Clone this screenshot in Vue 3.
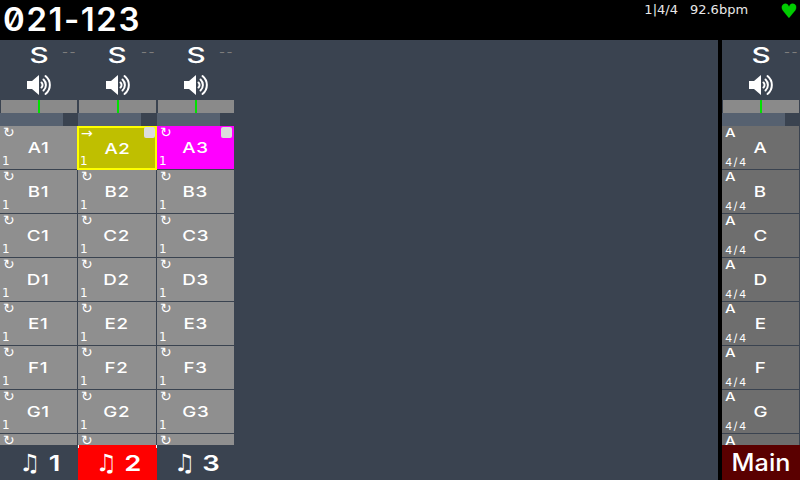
<script setup>
const rows = ['A', 'B', 'C', 'D', 'E', 'F', 'G']

const tracks = [
  { id: 1, selected: false },
  { id: 2, selected: true },
  { id: 3, selected: false },
]

const partClass = (track, row) => {
  if (row !== 'A') return ''
  if (track.id === 2) return 'part-next'
  if (track.id === 3) return 'part-playing'
  return ''
}
</script>

<template>
  <div class="screen">
    <header class="topbar">
      <div class="title">021-123</div>
      <div class="status">
        <span class="transport">1|4/4</span>
        <span class="bpm">92.6bpm</span>
        <span class="heart">♥</span>
      </div>
    </header>

    <main class="body">
      <section class="tracks">
        <div v-for="track in tracks" :key="track.id" class="strip">
          <div class="solo">
            <span class="solo-label">S</span>
            <span class="dashes">--</span>
          </div>
          <div class="speaker">
            <svg width="26" height="22" viewBox="0 0 26 22">
              <path d="M1 7h5l7-6v20l-7-6H1z" fill="#fff" />
              <g fill="none" stroke="#fff" stroke-width="2" stroke-linecap="round">
                <path d="M15.5 8.5a3.5 3.5 0 0 1 0 5" />
                <path d="M17.5 5.5a7.5 7.5 0 0 1 0 11" />
                <path d="M19.5 2a11.5 11.5 0 0 1 0 18" />
              </g>
            </svg>
          </div>
          <div class="pan"><i class="pan-mark"></i></div>
          <div class="level"><i class="level-fill"></i></div>
          <div class="cells">
            <div v-for="row in rows" :key="row" class="cell" :class="partClass(track, row)">
              <span class="mode">{{ row === 'A' && track.id === 2 ? '→' : '↻' }}</span>
              <span v-if="row === 'A' && track.id > 1" class="stop"></span>
              <span class="name">{{ row }}{{ track.id }}</span>
              <span class="count">1</span>
            </div>
            <div class="cell cell-cut"><span class="mode">↻</span></div>
          </div>
          <div class="tab" :class="{ 'tab-on': track.selected }">
            <span class="note">♫</span>
            <span class="tab-num">{{ track.id }}</span>
          </div>
        </div>
      </section>

      <div class="spacer"></div>

      <section class="strip master">
        <div class="solo">
          <span class="solo-label">S</span>
          <span class="dashes">--</span>
        </div>
        <div class="speaker">
          <svg width="26" height="22" viewBox="0 0 26 22">
            <path d="M1 7h5l7-6v20l-7-6H1z" fill="#fff" />
            <g fill="none" stroke="#fff" stroke-width="2" stroke-linecap="round">
              <path d="M15.5 8.5a3.5 3.5 0 0 1 0 5" />
              <path d="M17.5 5.5a7.5 7.5 0 0 1 0 11" />
              <path d="M19.5 2a11.5 11.5 0 0 1 0 18" />
            </g>
          </svg>
        </div>
        <div class="pan"><i class="pan-mark"></i></div>
        <div class="level"><i class="level-fill"></i></div>
        <div class="cells">
          <div v-for="row in rows" :key="row" class="cell scene">
            <span class="scene-tag">A</span>
            <span class="name">{{ row }}</span>
            <span class="count sig">4/4</span>
          </div>
          <div class="cell cell-cut scene"><span class="scene-tag">A</span></div>
        </div>
        <div class="tab tab-main"><span class="main-label">Main</span></div>
      </section>
    </main>
  </div>
</template>

<style>
html,
body {
  margin: 0;
  background: #3a4350;
}
</style>

<style scoped>
.screen {
  width: 800px;
  height: 480px;
  overflow: hidden;
  display: flex;
  flex-direction: column;
  background: #3a4350;
  color: #fff;
  font-family: Inter, "DejaVu Sans", sans-serif;
}

.topbar {
  height: 40px;
  flex: none;
  background: #000;
  display: flex;
  justify-content: space-between;
}

.title {
  padding-left: 3px;
  font-size: 32px;
  font-weight: 600;
  line-height: 40px;
  letter-spacing: 1.5px;
  font-feature-settings: "zero";
  transform: scaleX(1.03);
  transform-origin: left center;
}

.status {
  display: flex;
  align-items: flex-start;
  padding-top: 1px;
  font-family: "DejaVu Sans", sans-serif;
  font-size: 13px;
  line-height: 18px;
  color: #e8e8e8;
}

.bpm {
  margin-left: 12px;
}

.heart {
  margin-left: 32px;
  margin-right: 2px;
  margin-top: -2px;
  font-size: 20px;
  line-height: 24px;
  color: #00cc00;
}

.body {
  flex: 1;
  display: flex;
  min-height: 0;
}

.tracks {
  display: grid;
  grid-template-columns: 78px 79px 78px;
}

.spacer {
  flex: 1;
  border-right: 4px solid #000;
}

.strip {
  display: flex;
  flex-direction: column;
  height: 440px;
}

.master {
  width: 78px;
}

.solo {
  height: 30px;
  flex: none;
  position: relative;
  display: flex;
  justify-content: center;
  align-items: center;
}

.solo-label {
  font-size: 22px;
  font-weight: 500;
  line-height: 30px;
  transform: scaleX(1.35);
}

.dashes {
  position: absolute;
  right: 1px;
  top: 3px;
  font-size: 13px;
  line-height: 18px;
  letter-spacing: 1.5px;
  color: #7d7d7d;
}

.speaker {
  height: 30px;
  flex: none;
  display: flex;
  justify-content: center;
  align-items: center;
}

.pan {
  height: 13px;
  flex: none;
  margin: 0 1px;
  background: #8a8a8a;
  display: flex;
  justify-content: center;
}

.pan-mark {
  width: 2px;
  background: #00e000;
}

.level {
  height: 13px;
  flex: none;
  margin-right: 1px;
  background: #3a4350;
}

.level-fill {
  display: block;
  width: 63px;
  height: 100%;
  background: #566170;
}

.cells {
  flex: 1;
  min-height: 0;
  display: flex;
  flex-direction: column;
  gap: 1px;
}

.cell {
  height: 43px;
  flex: none;
  margin-right: 1px;
  box-sizing: border-box;
  position: relative;
  background: #8f8f8f;
  display: flex;
  align-items: center;
  justify-content: center;
}

.cell-cut {
  height: 11px;
}

/* yellow frame sits over the gaps round the cell */
.part-next {
  height: 44px;
  margin: 0 0 -1px -1px;
  z-index: 1;
  background: #bfbf00;
  border: 2px solid #ffff00;
}

.part-playing {
  background: #ff00ff;
}

.name {
  font-size: 15px;
  font-weight: 500;
  letter-spacing: 0.5px;
  transform: scaleX(1.25);
}

.mode {
  position: absolute;
  left: 3px;
  top: 0;
  font-family: "DejaVu Sans", sans-serif;
  font-size: 14px;
  line-height: 12px;
}

.part-next .mode {
  left: 2px;
  top: -1px;
}

.stop {
  position: absolute;
  right: 2px;
  top: 1px;
  width: 11px;
  height: 11px;
  border-radius: 2px;
  background: #dcdcdc;
}

.part-next .stop {
  right: 0;
  top: -1px;
}

.count {
  position: absolute;
  left: 2px;
  bottom: 1px;
  font-family: "DejaVu Sans", sans-serif;
  font-size: 12px;
  line-height: 13px;
}

.part-next .count {
  left: 1px;
  bottom: 0;
}

.scene {
  background: #6e6e6e;
}

.scene-tag {
  position: absolute;
  left: 4px;
  top: 0;
  font-size: 12px;
  font-weight: 500;
  line-height: 13px;
  transform: scaleX(1.25);
}

.sig {
  left: 3px;
  bottom: 0;
  font-family: Inter, sans-serif;
  font-size: 11px;
  letter-spacing: 1.5px;
}

.tab {
  height: 35px;
  flex: none;
  position: relative;
  display: flex;
  align-items: center;
  justify-content: center;
  gap: 9px;
  font-size: 22px;
  font-weight: 600;
}

.tab-on {
  background: #ff0000;
}

/* little white ticks at the top corners of the selected tab */
.tab-on::before,
.tab-on::after {
  content: "";
  position: absolute;
  top: 0;
  width: 1px;
  height: 3px;
  background: #fff;
}

.tab-on::before {
  left: 0;
}

.tab-on::after {
  right: 0;
}

.note {
  font-family: "DejaVu Sans", sans-serif;
  font-weight: 400;
  font-size: 24px;
}

.tab-num {
  transform: scaleX(1.25);
}

.tab-main {
  background: #5a0000;
}

.main-label {
  font-size: 24px;
  font-weight: 500;
  transform: scaleX(1.05);
}
</style>
